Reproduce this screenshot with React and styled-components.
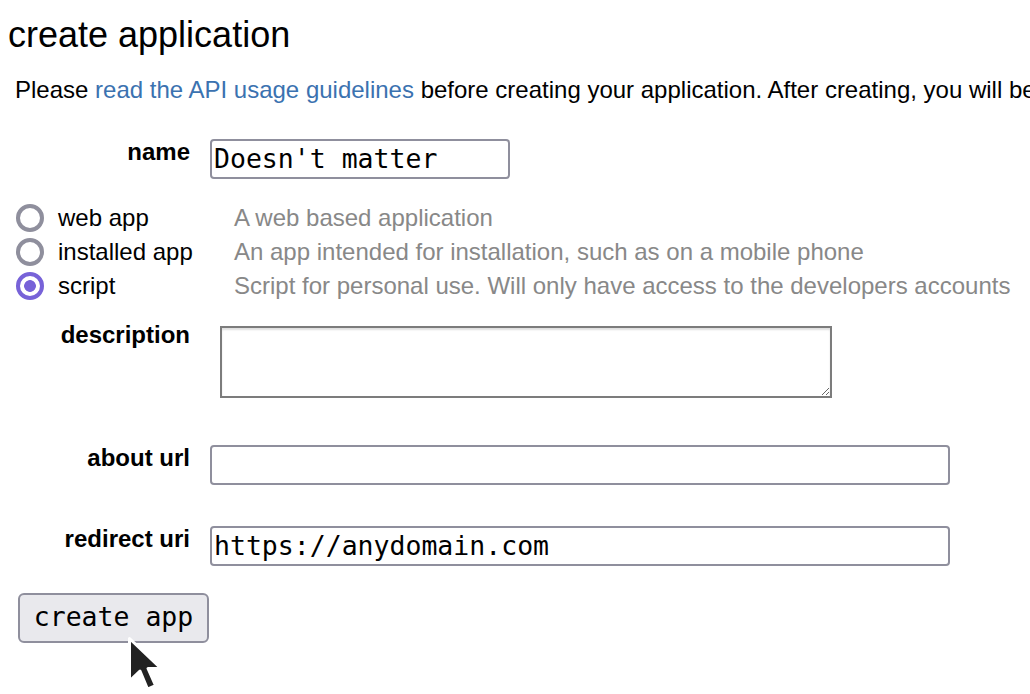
import React from "react";
import styled, { createGlobalStyle } from "styled-components";

const Global = createGlobalStyle`
  html, body { margin: 0; padding: 0; background: #fff; overflow: hidden; }
  body { font-family: "Liberation Sans", Arial, sans-serif; color: #000; }
`;

const Page = styled.div`
  position: relative;
  padding: 0 0 0 8px;
  width: 1030px;
  height: 694px;
  box-sizing: border-box;
  overflow: hidden;
`;

const Title = styled.h1`
  margin: 14px 0 0 0;
  font-size: 36px;
  line-height: 41px;
  font-weight: normal;
`;

const Intro = styled.p`
  margin: 21px 0 0 7px;
  font-size: 24px;
  line-height: 28px;
  white-space: nowrap;
`;

const Link = styled.a`
  color: #3b72b0;
  text-decoration: none;
`;

const Row = styled.div`
  display: flex;
  align-items: flex-start;
  margin-top: ${(p) => p.$top}px;
`;

const Label = styled.label`
  width: 182px;
  flex: none;
  padding-top: 1px;
  text-align: right;
  font-weight: bold;
  font-size: 24px;
  line-height: 28px;
`;

const TextInput = styled.input`
  box-sizing: border-box;
  margin: 1.5px 0 0 20px;
  width: ${(p) => p.$w}px;
  height: 40px;
  padding: 0 2px;
  border: 2px solid #8f8f9d;
  border-radius: 4px;
  background: #fff;
  font-family: "DejaVu Sans Mono", monospace;
  font-size: 26.5px;
  color: #000;
  outline: none;
`;

const TextArea = styled.textarea`
  box-sizing: border-box;
  margin: 6.5px 0 0 30px;
  width: 612px;
  height: 72px;
  border: 2px solid #7c7c7c;
  box-shadow: inset 0 2px 2px rgba(0, 0, 0, 0.13);
  background: #fff;
  font-family: "DejaVu Sans Mono", monospace;
  font-size: 20px;
  outline: none;
`;

const RadioGroup = styled.div`
  margin: 22.5px 0 0 9px;
  display: flex;
  flex-direction: column;
`;

const RadioRow = styled.div`
  display: flex;
  align-items: center;
  height: 34px;
  font-size: 24px;
  line-height: 34px;
`;

const RadioOption = styled.label`
  display: flex;
  align-items: center;
  width: 217px;
  flex: none;
  gap: 14px;
`;

const Radio = styled.input.attrs({ type: "radio" })`
  appearance: none;
  -webkit-appearance: none;
  margin: 0 0 0 -1px;
  width: 28px;
  height: 28px;
  box-sizing: border-box;
  border-radius: 50%;
  border: 4px solid #8f8f9d;
  background: #fff;
  &:checked {
    border-color: #7762d8;
    background: radial-gradient(circle, #7762d8 0 5.5px, #fff 6.2px);
  }
`;

const Hint = styled.span`
  color: #888;
  white-space: nowrap;
`;

const Button = styled.button`
  margin: 27px 0 0 10px;
  width: 191px;
  height: 50px;
  box-sizing: border-box;
  border: 2px solid #8f8f9d;
  border-radius: 6px;
  background: #e9e9ed;
  font-family: "DejaVu Sans Mono", monospace;
  font-size: 26.5px;
  color: #000;
  padding: 0 0 2px 0;
`;

const Cursor = styled.svg`
  position: absolute;
  left: 127px;
  top: 636px;
  width: 40px;
  height: 60px;
  overflow: visible;
`;

const types = [
  ["web app", "A web based application", false],
  ["installed app", "An app intended for installation, such as on a mobile phone", false],
  ["script", "Script for personal use. Will only have access to the developers accounts", true],
];

export default function App() {
  return (
    <>
      <Global />
      <Page>
        <Title>create application</Title>
        <Intro>
          Please <Link href="#">read the API usage guidelines</Link> before creating your application. After creating, you will be required to register for production API use.
        </Intro>
        <Row $top={33}>
          <Label>name</Label>
          <TextInput $w={300} defaultValue="Doesn't matter" />
        </Row>
        <RadioGroup>
          {types.map(([name, hint, checked]) => (
            <RadioRow key={name}>
              <RadioOption>
                <Radio name="app_type" defaultChecked={checked} />
                {name}
              </RadioOption>
              <Hint>{hint}</Hint>
            </RadioRow>
          ))}
        </RadioGroup>
        <Row $top={16.5}>
          <Label>description</Label>
          <TextArea />
        </Row>
        <Row $top={45.3}>
          <Label>about url</Label>
          <TextInput $w={740} />
        </Row>
        <Row $top={39.6}>
          <Label>redirect uri</Label>
          <TextInput $w={740} defaultValue="https://anydomain.com" />
        </Row>
        <Button>create app</Button>
        <Cursor viewBox="0 0 40 60">
          <path
            d="M2.5 2.5 L2.5 45 L13 35 L20.5 53 L28.5 49.5 L21 32.5 L34 32.5 Z"
            fill="#222"
            stroke="#fff"
            strokeWidth="3"
            strokeLinejoin="round"
          />
        </Cursor>
      </Page>
    </>
  );
}
